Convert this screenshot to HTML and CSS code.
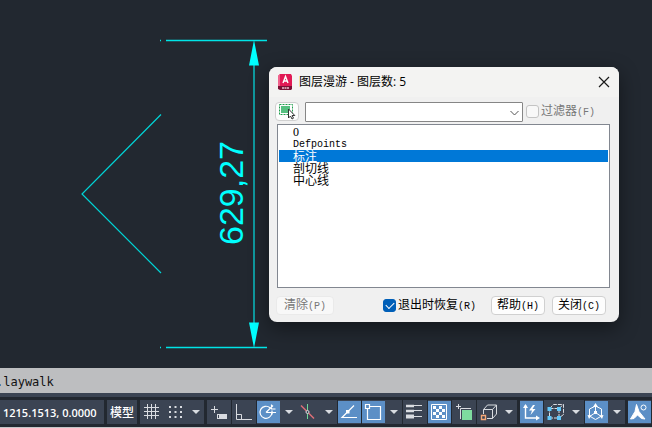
FILE: index.html
```html
<!DOCTYPE html>
<html lang="zh-CN">
<head>
<meta charset="utf-8">
<title>图层漫游</title>
<link rel="stylesheet" href="styles.css">
</head>
<body>
<main class="canvas">
  <svg class="drawing" width="268" height="368" viewBox="0 0 268 368">
    <g fill="none" stroke="#00d4d6" stroke-width="1.2">
      <path d="M161 114.500 82 194l79 79"/>
      <path d="M166 40.500h101M166 347.500h101M160 40.500h1M160 347.500h1" stroke="#00e4e6" stroke-width="1.3"/>
    </g>
    <path d="M254 60v270" stroke="#109a9f" stroke-width="2"/>
    <path d="M254 40l5 25.500h-10zM254 348l5-25.500h-10z" fill="#00ffff"/>
    <text class="dimension" transform="translate(243 245) rotate(-90)">629,27</text>
  </svg>

  <section class="dialog" role="dialog" aria-labelledby="dialog-title">
    <header class="titlebar">
      <svg class="app-icon" width="15" height="17" viewBox="0 0 15 17">
        <path d="M2 0h11l1 2v10H0V2z" fill="#e11a55"/>
        <path d="M0 2l2-2v12H0z" fill="#f0628c"/>
        <path d="M0 12h14v3l-1 1H2l-2-1z" fill="#7a1034"/>
        <path d="M5 9 7.500 2.500 10 9M6 7h3" fill="none" stroke="#fff" stroke-width="1.400"/>
        <path d="M4 14h7" stroke="#e9c5d0" stroke-width="1.500" stroke-dasharray="2 .5"/>
      </svg>
      <h1 class="title" id="dialog-title">图层漫游 - 图层数: 5</h1>
      <button class="close" type="button" aria-label="关闭">
        <svg width="12" height="12" viewBox="0 0 12 12"><path d="M1 1l10 10M11 1 1 11" stroke="#1a1a1a" stroke-width="1.200"/></svg>
      </button>
    </header>
    <div class="filters">
      <button class="pick" type="button" aria-label="选择对象">
        <svg width="18" height="16" viewBox="0 0 18 16">
          <path d="M3 2h9v7H3z" fill="#55c080"/>
          <path d="M1.500 .5h13v10h-13z" fill="none" stroke="#1f9d4c" stroke-dasharray="2 1"/>
          <path d="M10.500 5v9l2-2 1.500 3 1.500-.8-1.400-2.700h2.700z" fill="#fff" stroke="#333"/>
        </svg>
      </button>
      <div class="combo">
        <select aria-label="过滤器名称"><option></option></select>
        <svg class="chevron" width="9" height="6" viewBox="0 0 9 6"><path d="M.5 1l4 4 4-4" fill="none" stroke="#555"/></svg>
      </div>
      <input class="tick" type="checkbox" id="filter" disabled>
      <label class="muted" for="filter">过滤器<span class="latin">(F)</span></label>
    </div>
    <select class="layers" size="13" multiple aria-label="图层">
      <option class="digit">0</option>
      <option class="latin">Defpoints</option>
      <option selected>标注</option>
      <option>剖切线</option>
      <option>中心线</option>
    </select>
    <footer class="actions">
      <button class="push" type="button" disabled>清除<span class="latin">(P)</span></button>
      <input class="tick restore" type="checkbox" id="restore" checked>
      <label for="restore">退出时恢复<span class="latin">(R)</span></label>
      <button class="push help" type="button">帮助<span class="latin">(H)</span></button>
      <button class="push" type="button">关闭<span class="latin">(C)</span></button>
    </footer>
  </section>
</main>

<div class="command">
  <input class="prompt" type="text" value=".laywalk" aria-label="命令">
</div>

<nav class="status" aria-label="状态栏">
  <div class="group coords">1215.1513, 0.0000</div>
  <div class="group apart"><button class="model" type="button">模型</button></div>
  <div class="group apart">
    <button class="tool" type="button" aria-label="栅格"><svg viewBox="0 0 22 22"><path d="M3 6.500h15M3 10.500h15M3 14.500h15M6.500 3v15M10.500 3v15M14.500 3v15"/></svg></button>
    <button class="tool narrow" type="button" aria-label="捕捉"><svg viewBox="0 0 22 22"><path d="M5 6h13M5 11h13M5 16h13" stroke-width="2" stroke-dasharray="2 3.500"/></svg></button>
    <button class="more" type="button" aria-label="捕捉选项"></button>
  </div>
  <div class="group apart">
    <button class="tool" type="button" aria-label="动态输入"><svg viewBox="0 0 22 22"><path d="M3 8.500h7M6.500 5v7"/><path d="M9 13h10v5H9z" fill="#d8dbe0" stroke="none"/><path d="M10.500 14v3" stroke="#3b4453"/></svg></button>
  </div>
  <div class="group">
    <button class="tool" type="button" aria-label="正交"><svg viewBox="0 0 22 22"><path d="M3.500 3v15.500H19M3.500 13.500h5v5"/></svg></button>
  </div>
  <div class="group">
    <button class="tool on" type="button" aria-label="极轴追踪"><svg viewBox="0 0 22 22"><path d="M13 6.800A6 6 0 1 0 15 11.500" stroke-width="1.200"/><path d="M9 11.500h10M9 11.500l7-7M14.500 3.500v4.500h4M15 9.500v4" stroke-width="1.200"/></svg></button>
    <button class="more" type="button" aria-label="极轴选项"></button>
    <button class="tool narrow" type="button" aria-label="等轴测草图"><svg viewBox="0 0 22 22"><path d="M4 4.500l13 13" stroke="#e07078" stroke-width="1.400"/><path d="M10.500 3v15" stroke="#70d898"/><circle cx="10.500" cy="11" r="1.500" fill="#3b4453"/></svg></button>
    <button class="more" type="button" aria-label="等轴测选项"></button>
  </div>
  <div class="group">
    <button class="tool on" type="button" aria-label="对象捕捉追踪"><svg viewBox="0 0 22 22"><path d="M19 16.500H4L16 4.500" stroke-width="1.200"/><path d="M8 9h3.500v3.500H8z" fill="#fff" stroke="none"/></svg></button>
  </div>
  <div class="group">
    <button class="tool on" type="button" aria-label="对象捕捉"><svg viewBox="0 0 22 22"><path d="M8 5.500h10.500v13h-13V8M3.500 3.500h4v4h-4z" stroke-width="1.200"/></svg></button>
    <button class="more" type="button" aria-label="对象捕捉选项"></button>
  </div>
  <div class="group">
    <button class="tool" type="button" aria-label="线宽"><svg viewBox="0 0 22 22"><path d="M2 4.500h16M2 9.500h16M2 15.500h16"/><path d="M2 5h8M2 10h8" stroke-width="2.500"/><path d="M2 15.500h8" stroke-width="4"/></svg></button>
  </div>
  <div class="group">
    <button class="tool on" type="button" aria-label="透明度"><svg viewBox="0 0 22 22"><path d="M3.500 3.500h15v15h-15z"/><path d="M5 6.500h12M5 12.500h12" stroke-width="3" stroke-dasharray="3"/><path d="M8 9.500h9M8 15.500h9" stroke-width="3" stroke-dasharray="3"/></svg></button>
  </div>
  <div class="group">
    <button class="tool" type="button" aria-label="选择循环"><svg viewBox="0 0 22 22"><path d="M3 5.500h5M5.500 3v5M7.500 18V7.500H18" stroke-width="1"/><path d="M9 9h10v10H9z" fill="#7edc9f" stroke="none"/></svg></button>
  </div>
  <div class="group">
    <button class="tool narrow" type="button" aria-label="三维对象捕捉"><svg viewBox="0 0 22 22"><path d="M6.500 13V8.500h9v9H10M6.500 8.500l4-4.500h9v9l-4 4.500M15.500 8.500l4-4.500"/><path d="M4.500 14.500h4v4h-4z" stroke="#f5a878" stroke-width="1.400"/></svg></button>
    <button class="more" type="button" aria-label="三维捕捉选项"></button>
  </div>
  <div class="group apart">
    <button class="tool on" type="button" aria-label="动态 UCS"><svg viewBox="0 0 22 22"><path d="M5.500 4v13H18" stroke-width="1.400"/><path d="M3 7l2.500-4L8 7zM16 14.500l4 2.500-4 2.500z" fill="#fff" stroke="none"/><path d="M13 4l-4 5.500h3L10.500 14l5-6h-3L15 4z" fill="#fff" stroke="none"/></svg></button>
  </div>
  <div class="group">
    <button class="tool narrow" type="button" aria-label="选择过滤"><svg viewBox="0 0 22 22"><path d="M5.500 7.500h9.500v9.500H5.500zM5.500 7.500l4-4h10v10L15 17M15 7.500l4.500-4" stroke-dasharray="4 1"/><path d="M3.500 6h4v4h-4zM13 6h4v4h-4zM3.500 15h4v4h-4zM13 15h4v4h-4z" fill="#62c8fa" stroke="none"/></svg></button>
    <button class="more" type="button" aria-label="过滤选项"></button>
  </div>
  <div class="group">
    <button class="tool on" type="button" aria-label="小控件"><svg viewBox="0 0 22 22"><path d="M10.500 5 16.500 8v7l-6 3.500-6-3.500V8zM10.500 4v7.500L4 16M10.500 11.500 17 16"/><path d="M8 6l2.500-4L13 6zM2.500 14l4 .5L4 18zM18.500 14l-4 .5L17 18zM9 10h3v3H9z" fill="#fff" stroke="none"/></svg></button>
    <button class="more" type="button" aria-label="小控件选项"></button>
  </div>
  <div class="group apart">
    <button class="tool on" type="button" aria-label="注释可见性"><svg viewBox="0 0 22 22"><path d="M8.500 3.500l2.500 7 6 7.500-3.500-.5L9.500 14 6 17.500 2.500 18 7 10.500z" fill="#fff"/><circle cx="15.500" cy="6.500" r="2.500"/></svg></button>
  </div>
</nav>
</body>
</html>
```
FILE: styles.css
```css
* { box-sizing: border-box; }

body {
  margin: 0;
  min-height: 100vh;
  display: flex;
  flex-direction: column;
  overflow: hidden;
  background: #222830;
  font-family: "Open Sans", "Noto Sans CJK SC", sans-serif;
  font-size: 12px;
}

button, input, select { font: inherit; margin: 0; }

button { border: 0; padding: 0; background: none; color: inherit; }

.canvas { position: relative; flex: 1; background: #222830; }

.drawing { display: block; }

.dimension { font: 34px "Liberation Sans", sans-serif; fill: #00ffff; }

/* Layer walk window */
.dialog {
  position: absolute;
  left: 269px;
  top: 67px;
  width: 350px;
  padding-bottom: 3px;
  border-radius: 8px;
  background: #f0f0f0;
  color: #000;
  box-shadow: 0 6px 20px rgba(0, 0, 0, .45);
  line-height: 12px;
}

.titlebar {
  display: flex;
  align-items: center;
  height: 30px;
  padding: 0 9px;
  border-radius: 8px 8px 0 0;
  background: #f3f3f2;
}

.title { flex: 1; margin: 0 0 0 6px; font-size: 12px; font-weight: 400; }

.close { width: 12px; height: 12px; }

.close svg, .pick svg { display: block; }

.filters {
  display: flex;
  align-items: center;
  height: 27px;
  padding: 4px 6px 2px;
}

.pick {
  width: 24px;
  height: 19px;
  padding: 0 2px;
  border: 1px solid #d0d0d0;
  border-radius: 4px;
  background: #fdfdfd;
}

.combo { position: relative; width: 218px; margin: 0 3px 0 6px; }

.combo select {
  display: block;
  width: 100%;
  height: 20px;
  border: 1px solid #868686;
  border-radius: 1px;
  background: #fff;
  appearance: none;
}

.chevron { position: absolute; right: 4px; top: 8px; pointer-events: none; }

.tick {
  appearance: none;
  width: 13px;
  height: 13px;
  margin-right: 2px;
  border: 1px solid #c4c4c4;
  border-radius: 3px;
  background: #f8f8f8;
}

.tick:checked {
  border-color: #005fb8;
  background: #005fb8;
}

.tick:checked::after {
  content: "";
  display: block;
  width: 7px;
  height: 4px;
  margin: 2px;
  border: solid #fff;
  border-width: 0 0 1px 1px;
  transform: rotate(-45deg);
}

.muted, .push:disabled { color: #777; }

.latin { font-family: "Liberation Mono", monospace; font-size: 10px; }

.digit { font-family: "Liberation Serif", serif; }

.layers {
  display: block;
  width: calc(100% - 17px);
  height: 164px;
  margin: 0 9px 0 8px;
  padding: 1px;
  border: 1px solid #828790;
  border-radius: 0;
  background: #fff;
  color: #000;
  overflow: hidden;
  outline: 0;
}

.layers option {
  display: flex;
  align-items: center;
  height: 12px;
  min-height: 12px;
  padding: 0 0 0 14px;
  overflow: visible;
}

.layers option:checked {
  background: linear-gradient(#0078d7, #0078d7);
  color: #fff;
  -webkit-text-fill-color: #fff;
}

.actions {
  display: flex;
  align-items: center;
  height: 27px;
  margin-top: 4px;
  padding: 4px 13px 4px 7px;
}

.push {
  width: 54px;
  height: 19px;
  border: 1px solid #d0d0d0;
  border-radius: 4px;
  background: #fdfdfd;
  white-space: nowrap;
}

.push:disabled { width: 58px; border-color: #eaeaea; background: #f8f8f8; }

.restore { margin-left: auto; }

.help { margin: 0 7px 0 15px; }

/* Command line */
.command { height: 25px; background: #bdbec0; overflow: hidden; }

.prompt {
  display: block;
  width: 100%;
  height: 25px;
  margin-left: -4px;
  padding: 3px 0 0;
  border: 0;
  background: none;
  color: #111;
  font-family: "DejaVu Sans Mono", monospace;
}

/* Status bar */
.status {
  display: flex;
  gap: 1px;
  height: 35px;
  padding: 3px 0;
  border-top: 4px solid #3b4453;
  border-bottom: 1px solid #c4c6c8;
  background: #222830;
  color: #fff;
  overflow: hidden;
}

.group {
  display: flex;
  align-items: center;
  flex: none;
  height: 24px;
  background: #3b4453;
}

.apart { margin-left: 2px; }

.coords { width: 104px; padding-left: 3px; font-size: 11px; font-weight: 600; white-space: nowrap; }

.model { width: 30px; font-weight: 500; }

.tool { width: 24px; height: 22px; }

.tool svg {
  display: block;
  width: 22px;
  height: 22px;
  margin: 0 auto;
  fill: none;
  stroke: #d8dbe0;
}

.narrow, .on { width: 23px; }

.on { background: #5c8fc6; }

.narrow svg, .on svg { margin: 0; }

.on svg { stroke: #fff; }

.more { width: 17px; height: 22px; }

.more::before {
  content: "";
  display: block;
  width: 0;
  margin: 0 auto;
  border: 4px solid transparent;
  border-top-color: #d8dbe0;
  border-bottom-width: 0;
}
```
